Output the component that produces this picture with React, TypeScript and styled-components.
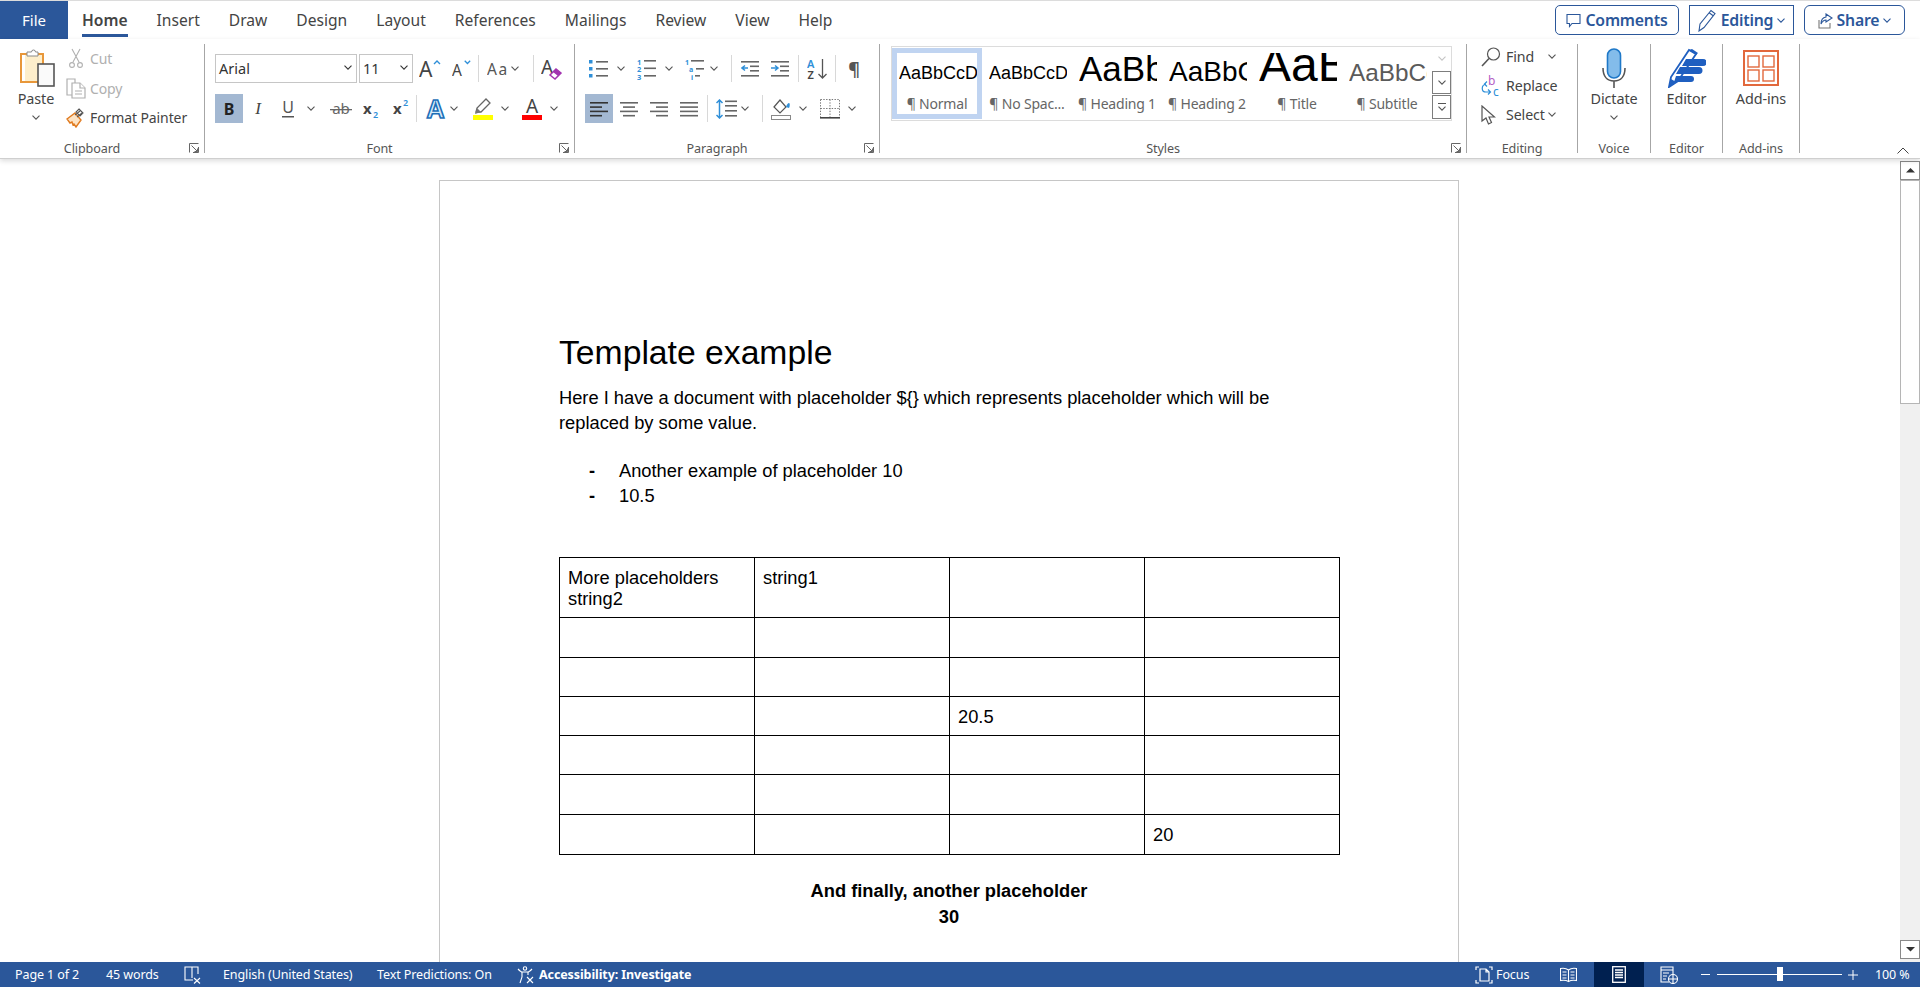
import React from 'react';
import styled, { createGlobalStyle } from 'styled-components';

const UI_FONT = '"Noto Sans", "Open Sans", "Liberation Sans", sans-serif';
const BLUE = '#2b579a';
const ICON_BLUE = '#2f8fd8';

const GlobalStyle = createGlobalStyle`
  html, body {
    margin: 0;
    padding: 0;
    height: 100%;
    overflow: hidden;
    background: #fff;
  }
  * {
    box-sizing: border-box;
  }
`;

const Window = styled.div`
  display: flex;
  flex-direction: column;
  height: 100vh;
  font-family: ${UI_FONT};
  color: #444;
`;

const TabRow = styled.div`
  display: flex;
  align-items: stretch;
  height: 39px;
  flex-shrink: 0;
  border-top: 1px solid #dcdcdc;
  background: #fff;
`;

const FileTab = styled.div`
  width: 68px;
  background: ${BLUE};
  color: #fff;
  font-size: 15px;
  display: flex;
  align-items: center;
  justify-content: center;
`;

const Tabs = styled.div`
  display: flex;
  padding-left: 14px;
  gap: 29px;
`;

const Tab = styled.div<{ $active?: boolean }>`
  position: relative;
  font-size: 15.6px;
  line-height: 38px;
  color: #444;
  font-weight: ${(p) => (p.$active ? 600 : 400)};
  border-bottom: 3px solid ${(p) => (p.$active ? BLUE : 'transparent')};
  height: 36px;
`;

const TopActions = styled.div`
  margin-left: auto;
  display: flex;
  align-items: flex-start;
  gap: 10px;
  padding: 4px 15px 0 0;
`;

const ActionButton = styled.div<{ $w: number; $radius: number }>`
  width: ${(p) => p.$w}px;
  height: 30px;
  border: 1px solid ${BLUE};
  border-radius: ${(p) => p.$radius}px;
  color: ${BLUE};
  display: flex;
  align-items: center;
  justify-content: center;
  gap: 4px;
  font-size: 15.8px;
  font-weight: 600;
  letter-spacing: -0.2px;
`;

const Ribbon = styled.div`
  display: flex;
  height: 120px;
  flex-shrink: 0;
  padding-top: 5px;
  background: #fff;
  border-bottom: 1px solid #cfcfcf;
  box-shadow: 0 2px 5px rgba(0, 0, 0, 0.14);
  position: relative;
  z-index: 2;
`;

const Group = styled.div<{ $w: number; $pl?: number }>`
  position: relative;
  width: ${(p) => p.$w}px;
  height: 109px;
  padding-left: ${(p) => p.$pl ?? 0}px;
  border-right: 1px solid #a6a6a6;
  flex-shrink: 0;
`;

const GroupBody = styled.div`
  height: 99px;
`;

const GroupLabel = styled.div<{ $launcher?: boolean }>`
  position: absolute;
  left: 0;
  right: ${(p) => (p.$launcher ? 20 : 0)}px;
  bottom: -1px;
  height: 10px;
  line-height: 10px;
  font-size: 12.6px;
  letter-spacing: -0.1px;
  text-align: center;
  color: #555;
`;

const Launcher = styled.div`
  position: absolute;
  right: 5px;
  bottom: 0;
  width: 10px;
  height: 10px;
  display: flex;
`;

const Collapse = styled.div`
  position: absolute;
  right: 11px;
  bottom: 4px;
  display: flex;
`;

const ToolRows = styled.div`
  display: flex;
  flex-direction: column;
  gap: 11px;
  padding-top: 10px;
`;

const ToolRow = styled.div`
  display: flex;
  height: 29px;
  align-items: center;
`;

const Cell = styled.div<{ $w: number; $ml?: number; $on?: boolean }>`
  width: ${(p) => p.$w}px;
  margin-left: ${(p) => p.$ml ?? 0}px;
  height: 29px;
  flex-shrink: 0;
  display: flex;
  align-items: center;
  justify-content: center;
  background: ${(p) => (p.$on ? '#a3b8d2' : 'transparent')};
`;

const Divider = styled.div<{ $ml: number }>`
  width: 1px;
  height: 27px;
  flex-shrink: 0;
  margin-left: ${(p) => p.$ml}px;
  margin-right: -1px;
  background: #d8d8d8;
`;

const Combo = styled.div<{ $w: number; $ml?: number }>`
  width: ${(p) => p.$w}px;
  margin-left: ${(p) => p.$ml ?? 0}px;
  height: 29px;
  flex-shrink: 0;
  border: 1px solid #c6c6c6;
  display: flex;
  align-items: center;
  justify-content: space-between;
  padding: 0 4px 2px 3px;
  font-size: 14.5px;
  color: #333;
`;

const ClipboardBody = styled.div`
  display: flex;
`;

const BigButton = styled.div<{ $w: number }>`
  width: ${(p) => p.$w}px;
  flex-shrink: 0;
  display: flex;
  flex-direction: column;
  align-items: center;
  padding-top: 3px;
`;

const BigIcon = styled.div<{ $shift?: number }>`
  height: 41px;
  padding-left: ${(p) => p.$shift ?? 0}px;
  display: flex;
  align-items: center;
  justify-content: center;
`;

const BigText = styled.div`
  font-size: 14.4px;
  letter-spacing: -0.1px;
  line-height: 21px;
  color: #444;
`;

const BigChevron = styled.div`
  height: 16px;
  display: flex;
  align-items: center;
`;

const SmallList = styled.div`
  display: flex;
  flex-direction: column;
  margin-left: -6px;
`;

const SmallRow = styled.div<{ $muted?: boolean }>`
  height: 29.5px;
  display: flex;
  align-items: center;
  font-size: 14px;
  letter-spacing: -0.1px;
  color: ${(p) => (p.$muted ? '#b0b0b0' : '#444')};
`;

const SmallIcon = styled.div`
  width: 24px;
  padding-right: 4px;
  flex-shrink: 0;
  display: flex;
  align-items: center;
  justify-content: center;
`;

const Gallery = styled.div`
  margin: 2px 0 0 11px;
  width: 561px;
  height: 75px;
  border: 1px solid #dcdcdc;
  display: flex;
`;

const StyleItem = styled.div<{ $on?: boolean }>`
  width: 90px;
  height: 71px;
  margin-top: 1px;
  flex-shrink: 0;
  border: 5px solid ${(p) => (p.$on ? '#c0d4f1' : 'transparent')};
  display: flex;
  flex-direction: column;
  align-items: center;
  overflow: hidden;
`;

const StyleSample = styled.div<{ $size: number; $color?: string; $base: number }>`
  width: 78px;
  margin-left: 2px;
  height: 35px;
  flex-shrink: 0;
  overflow: hidden;
  white-space: nowrap;
  font-family: 'Liberation Sans', Arial, sans-serif;
  font-size: ${(p) => p.$size}px;
  color: ${(p) => p.$color ?? '#000'};
  line-height: ${(p) => p.$base}px;
  text-align: left;
`;

const StyleName = styled.div`
  font-size: 14px;
  letter-spacing: -0.2px;
  line-height: 18px;
  margin-top: 7px;
  color: #666;
  white-space: nowrap;
`;

const GalleryScroll = styled.div`
  width: 19px;
  margin-left: auto;
  display: flex;
  flex-direction: column;
`;

const ScrollStep = styled.div<{ $border?: boolean }>`
  flex: 1;
  display: flex;
  flex-direction: column;
  gap: 2px;
  align-items: center;
  justify-content: center;
  border: 1px solid ${(p) => (p.$border ? '#7d7d7d' : 'transparent')};
  margin-bottom: ${(p) => (p.$border ? 1 : 0)}px;
`;

const MoreLine = styled.div`
  width: 8px;
  height: 1px;
  background: #555;
`;

const EditList = styled.div`
  display: flex;
  flex-direction: column;
  padding-left: 14px;
  margin-top: -2px;
`;

const EditRow = styled.div`
  height: 29px;
  display: flex;
  align-items: center;
  font-size: 14.2px;
  letter-spacing: -0.1px;
  color: #444;
`;

const EditIcon = styled.div`
  width: 25px;
  flex-shrink: 0;
  display: flex;
  align-items: center;
`;

const Main = styled.div`
  flex: 1;
  min-height: 0;
  display: flex;
  background: #fff;
`;

const DocArea = styled.div`
  flex: 1;
  overflow: hidden;
  padding: 21px 0 0 439px;
`;

const Page = styled.div`
  width: 1020px;
  min-height: 1300px;
  border: 1px solid #c6c6c6;
  background: #fff;
  padding: 152px 0 0 119px;
  font-family: 'Liberation Sans', Arial, sans-serif;
  font-size: 18.3px;
  color: #000;
`;

const DocTitle = styled.div`
  font-size: 33.7px;
  line-height: 38px;
  height: 53px;
`;

const DocParagraph = styled.div`
  width: 760px;
  line-height: 24.5px;
`;

const DocList = styled.ul`
  list-style: none;
  margin: 23px 0 0;
  padding: 0 0 0 30px;
`;

const DocListItem = styled.li`
  display: flex;
  line-height: 25px;
`;

const Dash = styled.span`
  width: 30px;
  font-weight: 700;
`;

const DocTable = styled.table`
  margin-top: 49px;
  border-collapse: collapse;
  table-layout: fixed;
  width: 780px;
`;

const DocRow = styled.tr<{ $h: number }>`
  height: ${(p) => p.$h}px;
`;

const DocCell = styled.td`
  width: 195px;
  border: 1px solid #000;
  padding: 8.5px 8px;
  line-height: 21px;
  vertical-align: top;
`;

const DocFooter = styled.div`
  width: 780px;
  margin-top: 23px;
  text-align: center;
  font-weight: 700;
  line-height: 25.5px;
`;

const ScrollBar = styled.div`
  width: 20px;
  flex-shrink: 0;
  margin-top: 2px;
  background: #f0f0f0;
  display: flex;
  flex-direction: column;
  padding-bottom: 3px;
`;

const ScrollButton = styled.div<{ $end?: boolean }>`
  height: 19px;
  margin-top: ${(p) => (p.$end ? 'auto' : '0')};
  background: #fff;
  border: 1px solid #8a8a8a;
  display: flex;
  align-items: center;
  justify-content: center;
  flex-shrink: 0;
`;

const ScrollThumb = styled.div`
  height: 224px;
  background: #fff;
  border: 1px solid #b5b5b5;
  flex-shrink: 0;
`;

const StatusBar = styled.div`
  height: 25px;
  flex-shrink: 0;
  background: ${BLUE};
  color: #fff;
  display: flex;
  align-items: stretch;
  font-size: 12.5px;
  letter-spacing: -0.1px;
`;

const StatusItem = styled.div<{ $w?: number; $ml?: number; $on?: boolean; $bold?: boolean }>`
  width: ${(p) => (p.$w ? `${p.$w}px` : 'auto')};
  margin-left: ${(p) => p.$ml ?? 0}px;
  flex-shrink: 0;
  display: flex;
  align-items: center;
  white-space: nowrap;
  background: ${(p) => (p.$on ? '#002050' : 'transparent')};
  justify-content: ${(p) => (p.$on ? 'center' : 'flex-start')};
  font-weight: ${(p) => (p.$bold ? 700 : 400)};
`;

const StatusRight = styled.div`
  margin-left: auto;
  display: flex;
  align-items: stretch;
`;

const ZoomTrack = styled.div`
  position: relative;
  width: 125px;
  margin-left: 7px;
  display: flex;
  align-items: center;
`;

const ZoomLine = styled.div`
  width: 100%;
  height: 1px;
  background: #fff;
`;

const ZoomThumb = styled.div`
  position: absolute;
  left: 60px;
  top: 5px;
  width: 6px;
  height: 14px;
  background: #fff;
`;

const GlyphText = styled.span<{ $bold?: boolean; $italic?: boolean; $size?: number; $color?: string }>`
  font-family: ${(p) => (p.$italic ? "'Liberation Serif', serif" : UI_FONT)};
  font-size: ${(p) => p.$size ?? 15}px;
  font-weight: ${(p) => (p.$bold ? 700 : 400)};
  font-style: ${(p) => (p.$italic ? 'italic' : 'normal')};
  color: ${(p) => p.$color ?? '#444'};
  line-height: 1;
`;

const Chevron = ({ color = '#555' }: { color?: string }) => (
  <svg width="8" height="5" viewBox="0 0 8 5">
    <path d="M.5.7 4 4.2 7.5.7" fill="none" stroke={color} strokeWidth="1.1" />
  </svg>
);

const LauncherIcon = () => (
  <svg width="10" height="10" viewBox="0 0 10 10" fill="none" stroke="#666">
    <path d="M.5 9.5v-9h9M9.5 4v5.5H4M2.5 2.5l6 6M5.500 8.500h3v-3" />
  </svg>
);

const Lines = ({ rows, color = '#666' }: { rows: [number, number, number][]; color?: string }) => (
  <>
    {rows.map(([rx, ry, rw], i) => (
      <rect key={i} x={rx} y={ry} width={rw} height="1.6" fill={color} />
    ))}
  </>
);

const PasteIcon = () => (
  <svg width="35" height="39" viewBox="0 0 35 39">
    <rect x="1" y="6" width="22" height="28" fill="#fdeecb" stroke="#e8973a" strokeWidth="2" />
    <rect x="2" y="7" width="3" height="26" fill="#fff" />
    <path d="M7 8V4h4.500a2 2 0 0 1 4 0H18v4z" fill="#fff" stroke="#8a8a8a" />
    <rect x="18" y="16" width="16" height="22" fill="#fafafa" stroke="#555" strokeWidth="1.6" />
  </svg>
);

const ScissorsIcon = () => (
  <svg width="14" height="21" viewBox="0 0 14 21" fill="none" stroke="#b0b0b0" strokeWidth="1.1">
    <path d="M3 1l7 13M11 1 4 14" />
    <circle cx="3" cy="17" r="2.4" />
    <circle cx="11" cy="17" r="2.4" />
  </svg>
);

const CopyIcon = () => (
  <svg width="20" height="21" viewBox="0 0 20 21" fill="#fff" stroke="#b0b0b0" strokeWidth="1.2">
    <path d="M1 1h8v16H1z" />
    <path d="M6 5h8l5 5v10H6z" />
    <path d="M14 5v5h5M9 13h7M9 16h7" />
  </svg>
);

const BrushIcon = () => (
  <svg width="20" height="20" viewBox="0 0 20 20">
    <path d="M1 11 9 5l6 7-5 7-2-3-1 1-1-3-2 1z" fill="#fde3c4" stroke="#e07a1f" strokeWidth="1.4" />
    <path d="M9 7l5-4M11 9l5-4M13 1l4 4-3 3-4-4z" fill="#fff" stroke="#555" strokeWidth="1.1" />
  </svg>
);

const GrowIcon = ({ big, up }: { big?: boolean; up?: boolean }) => (
  <svg width="22" height="22" viewBox="0 0 22 22">
    <text x="0" y="19" fontFamily={UI_FONT} fontSize={big ? 21 : 17} fill="#444">A</text>
    <path d={up ? 'M15 6l3-3 3 3' : 'M14 2l3 3 3-3'} fill="none" stroke={ICON_BLUE} strokeWidth="1.4" />
  </svg>
);

const CaseIcon = () => (
  <svg width="22" height="18" viewBox="0 0 22 18">
    <text x="0" y="15" fontFamily={UI_FONT} fontSize="15.5" fill="#555" letterSpacing="1.5">Aa</text>
  </svg>
);

const ClearIcon = () => (
  <svg width="22" height="22" viewBox="0 0 22 22">
    <text x="0" y="16" fontFamily={UI_FONT} fontSize="19" fill="#444">A</text>
    <path d="M9 17l6-6 5 4-6 6z" fill="#fff" stroke="#a335b0" strokeWidth="1.5" />
    <path d="M15 11l5 4-3 3-5-4z" fill="#a335b0" />
  </svg>
);

const UnderlineIcon = () => (
  <svg width="14" height="20" viewBox="0 0 14 20">
    <text x="7" y="14" textAnchor="middle" fontFamily={UI_FONT} fontSize="16" fill="#555">U</text>
    <rect x="1" y="17" width="12" height="1.5" fill="#555" />
  </svg>
);

const StrikeIcon = () => (
  <svg width="22" height="16" viewBox="0 0 22 16">
    <text x="11" y="13" textAnchor="middle" fontFamily={UI_FONT} fontSize="15" fill="#666">ab</text>
    <rect x="0" y="8" width="22" height="1.3" fill="#666" />
  </svg>
);

const ScriptIcon = ({ up }: { up?: boolean }) => (
  <svg width="18" height="20" viewBox="0 0 18 20">
    <text x="0" y="15" fontFamily={UI_FONT} fontSize="15" fontWeight="700" fill="#444">x</text>
    <text x="10" y={up ? 7 : 19} fontFamily={UI_FONT} fontSize="9" fontWeight="600" fill={ICON_BLUE}>2</text>
  </svg>
);

const TextEffectIcon = () => (
  <svg width="21" height="22" viewBox="0 0 21 22">
    <text x="10.5" y="20" textAnchor="middle" fontFamily="'Liberation Sans', sans-serif" fontSize="25" fontWeight="700" fill="#d7ecfa" stroke="#1d6fb8" strokeWidth="1.6">A</text>
  </svg>
);

const HighlightIcon = () => (
  <svg width="20" height="24" viewBox="0 0 20 24">
    <path d="M3 15l1-4L13 2l4 4-9 9z" fill="#fff" stroke="#666" strokeWidth="1.3" />
    <path d="M2 17l2-6 4 4z" fill="#777" />
    <rect y="18" width="20" height="5" fill="#ffff00" />
  </svg>
);

const FontColorIcon = () => (
  <svg width="20" height="24" viewBox="0 0 20 24">
    <text x="10" y="16" textAnchor="middle" fontFamily={UI_FONT} fontSize="19" fill="#444">A</text>
    <rect y="18" width="20" height="5" fill="#ff0000" />
  </svg>
);

const BulletsIcon = () => (
  <svg width="20" height="20" viewBox="0 0 20 20">
    <rect x="0" y="1" width="3.5" height="3.5" fill={ICON_BLUE} />
    <rect x="0" y="8" width="3.5" height="3.5" fill={ICON_BLUE} />
    <rect x="0" y="15" width="3.5" height="3.5" fill={ICON_BLUE} />
    <Lines rows={[[7, 2, 12], [7, 9, 12], [7, 16, 12]]} />
  </svg>
);

const NumberingIcon = () => (
  <svg width="20" height="22" viewBox="0 0 20 22">
    <g fontFamily={UI_FONT} fontSize="7.5" fontWeight="700" fill={ICON_BLUE}>
      <text x="0" y="6.5">1</text>
      <text x="0" y="14">2</text>
      <text x="0" y="21.5">3</text>
    </g>
    <Lines rows={[[7, 2, 12], [7, 9.5, 12], [7, 17, 12]]} />
  </svg>
);

const MultilevelIcon = () => (
  <svg width="20" height="22" viewBox="0 0 20 22">
    <g fontFamily={UI_FONT} fontSize="7" fontWeight="700" fill={ICON_BLUE}>
      <text x="0" y="6.5">1</text>
      <text x="4" y="14">a</text>
      <text x="6" y="21.5">i</text>
    </g>
    <Lines rows={[[6, 2, 13], [11, 10, 8], [10, 17, 5]]} />
  </svg>
);

const IndentIcon = ({ more }: { more?: boolean }) => (
  <svg width="18" height="18" viewBox="0 0 18 18">
    <Lines rows={[[0, 1, 18], [9, 5.5, 9], [9, 10, 9], [0, 15, 18]]} />
    <path d={more ? 'M0 8h6M4 5.500 7 8l-3 2.500' : 'M7 8H1M4 5.500 1 8l3 2.500'} fill="none" stroke={ICON_BLUE} strokeWidth="1.5" />
  </svg>
);

const SortIcon = () => (
  <svg width="21" height="22" viewBox="0 0 21 22">
    <text x="0" y="9.5" fontFamily={UI_FONT} fontSize="11" fontWeight="600" fill={ICON_BLUE}>A</text>
    <text x="0.5" y="21" fontFamily={UI_FONT} fontSize="11" fontWeight="600" fill="#444">Z</text>
    <path d="M15.500 1v19M11.500 16l4 4 4-4" fill="none" stroke="#555" strokeWidth="1.3" />
  </svg>
);

const AlignIcon = ({ rows, dark }: { rows: [number, number][]; dark?: boolean }) => (
  <svg width="18" height="16" viewBox="0 0 18 16">
    {rows.map(([x, w], i) => (
      <rect key={i} x={x} y={1 + i * 4.3} width={w} height="1.6" fill={dark ? '#333' : '#666'} />
    ))}
  </svg>
);

const LineSpacingIcon = () => (
  <svg width="21" height="20" viewBox="0 0 21 20">
    <path d="M3.500 1v18M.5 4l3-3 3 3M.5 16l3 3 3-3" fill="none" stroke={ICON_BLUE} strokeWidth="1.5" />
    <Lines rows={[[9, 1.5, 12], [9, 6, 12], [9, 11, 12], [9, 16, 12]]} />
  </svg>
);

const ShadingIcon = () => (
  <svg width="20" height="22" viewBox="0 0 20 22">
    <path d="M3 9l6-7 6 7-6 6z" fill="#fff" stroke="#555" strokeWidth="1.2" />
    <path d="M15 9c1-3 2-4 3-4s1 3 0 5z" fill={ICON_BLUE} />
    <rect x=".5" y="17.5" width="19" height="4" fill="#fff" stroke="#888" />
  </svg>
);

const BordersIcon = () => (
  <svg width="20" height="20" viewBox="0 0 20 20" fill="none">
    <path d="M.5.5h19v18M.5.5v18M10 .5v18M.5 9.500h19" stroke="#777" strokeDasharray="1.4 1.4" />
    <rect x="0" y="18" width="20" height="1.6" fill="#444" />
  </svg>
);

const FindIcon = () => (
  <svg width="20" height="20" viewBox="0 0 20 20" fill="none" stroke="#555" strokeWidth="1.2">
    <circle cx="12.5" cy="7" r="6" />
    <path d="M8 11.500 1 19" strokeWidth="1.6" />
  </svg>
);

const ReplaceIcon = () => (
  <svg width="20" height="22" viewBox="0 0 20 22">
    <text x="7" y="10" fontFamily={UI_FONT} fontSize="12" fill="#b45cc4">b</text>
    <text x="12" y="21" fontFamily={UI_FONT} fontSize="12" fill={ICON_BLUE}>c</text>
    <path d="M5 9C0 10 0 17 5 17h4M7 14.500 9.500 17 7 19.500M6 6.500 3.500 9 6 11.500" fill="none" stroke={ICON_BLUE} strokeWidth="1.2" />
  </svg>
);

const SelectIcon = () => (
  <svg width="15" height="20" viewBox="0 0 15 20">
    <path d="M1 1v15l4-3 2.500 6 3-1.500L8 12h5.500z" fill="#fff" stroke="#555" strokeWidth="1.2" />
  </svg>
);

const MicIcon = () => (
  <svg width="24" height="40" viewBox="0 0 24 40">
    <rect x="5.500" y="1" width="13" height="29" rx="6.500" fill="#83bcea" stroke="#1e78c8" strokeWidth="1.6" />
    <path d="M1 20c0 8 4 13 11 13s11-5 11-13M12 33v7" fill="none" stroke="#555" strokeWidth="1.6" />
  </svg>
);

const EditorIcon = () => (
  <svg width="38" height="40" viewBox="0 0 38 40">
    <path d="M1 39 3 29 21 2l7 4L10 33z" fill="#fff" stroke="#1f5fc0" strokeWidth="1.8" />
    <path d="M21 2l3-1 6 4-2 2zM1 39l2-8 5 3z" fill="#1f5fc0" />
    <path d="M18 11h17a3 3 0 0 1 0 7H14zM12 19h19a3 3 0 0 1 0 7H8zM8 28h15a3 3 0 0 1 0 6H6z" fill="#1f5fc0" />
  </svg>
);

const AddinsIcon = () => (
  <svg width="36" height="36" viewBox="0 0 36 36" fill="none" stroke="#e2683c" strokeWidth="1.4">
    <rect x="1" y="1" width="34" height="34" strokeWidth="2" />
    <rect x="5" y="6" width="11" height="11" />
    <rect x="20" y="6" width="11" height="11" />
    <rect x="5" y="20" width="11" height="11" />
    <rect x="20" y="20" width="11" height="11" />
  </svg>
);

const CommentIcon = () => (
  <svg width="15" height="15" viewBox="0 0 15 15">
    <path d="M1 1.500h13v9H6L3.500 13.500v-3H1z" fill="#fff" stroke={BLUE} strokeWidth="1.1" />
  </svg>
);

const PencilIcon = () => (
  <svg width="19" height="23" viewBox="0 0 19 23">
    <path d="M1 22 2 15 13 1.500l4 3L6 18.500zM11.500 4l4 3" fill="#fff" stroke={BLUE} strokeWidth="1.1" />
  </svg>
);

const ShareIcon = () => (
  <svg width="15" height="17" viewBox="0 0 15 17" fill="none" stroke="#777" strokeWidth="1.1">
    <path d="M8 2l6 4-6 4V8C5 8 4 10 3 12c0-5 2-6.500 5-7z" stroke={BLUE} />
    <path d="M1 8v8h11v-5" />
  </svg>
);

const ScrollArrow = ({ up }: { up?: boolean }) => (
  <svg width="9" height="4.500" viewBox="0 0 8 4">
    <path d={up ? 'M0 4 4 0l4 4z' : 'M0 0l4 4 4-4z'} fill="#333" />
  </svg>
);

const ProofIcon = () => (
  <svg width="18" height="18" viewBox="0 0 18 18" fill="none" stroke="#fff" strokeWidth="1.1">
    <path d="M9 14H1V1h7.500L14 1v7M8 1v11" />
    <path d="M10 12l6 5.500M16 12l-6 5.500" />
  </svg>
);

const AccessibilityIcon = () => (
  <svg width="18" height="18" viewBox="0 0 18 18" fill="none" stroke="#fff" strokeWidth="1.1">
    <circle cx="8" cy="2.500" r="1.700" />
    <path d="M1 3c3 3 4 3 4 3v5L3 17M15 3c-3 3-4 3-4 3v3M5 6h6" />
    <path d="M10 11l6 6M16 11l-6 6" />
  </svg>
);

const FocusIcon = () => (
  <svg width="18" height="18" viewBox="0 0 18 18" fill="none" stroke="#fff" strokeWidth="1.2">
    <path d="M1 4V1h3M14 1h3v3M17 14v3h-3M4 17H1v-3" />
    <path d="M5 15V3h6l3 3v9zM11 3v3h3" />
  </svg>
);

const ReadIcon = () => (
  <svg width="17" height="16" viewBox="0 0 17 16" fill="none" stroke="#fff" strokeWidth="1.1">
    <path d="M8.500 3C6 1 3 1 .5 1.500v12c2.500-.5 5.500-.5 8 1 2.500-1.500 5.500-1.500 8-1v-12C14 1 11 1 8.500 3zM8.500 3v11.500M2.500 5H6.500M2.500 8H6.500M2.500 11H6.500M10.500 5h4M10.500 8h4M10.500 11h4" />
  </svg>
);

const PrintIcon = () => (
  <svg width="14" height="17" viewBox="0 0 14 17" fill="none" stroke="#fff" strokeWidth="1.300">
    <rect x=".7" y=".7" width="12.600" height="15.600" />
    <path d="M3 4h8M3 6.500h8M3 9h8M3 11.500h8" />
  </svg>
);

const WebIcon = () => (
  <svg width="18" height="18" viewBox="0 0 18 18" fill="none" stroke="#fff" strokeWidth="1.1">
    <path d="M9 16H1V1h12v7M1 4h12M3 7h6M3 10h4M3 13h3" />
    <circle cx="13" cy="13" r="4.500" fill={BLUE} />
    <path d="M8.500 13h9M13 8.500v9" />
  </svg>
);

const Minus = () => (
  <svg width="9" height="9" viewBox="0 0 9 9"><rect y="4" width="9" height="1" fill="#fff" /></svg>
);

const Plus = () => (
  <svg width="10" height="10" viewBox="0 0 10 10"><path d="M0 5h10M5 0v10" stroke="#fff" /></svg>
);

const tabs = ['Insert', 'Draw', 'Design', 'Layout', 'References', 'Mailings', 'Review', 'View', 'Help'];
const rowHeights = [60, 40, 39, 39, 39, 40, 40];

const tableText: Record<string, React.ReactNode> = {
  '0-0': (
    <>
      More placeholders
      <br />
      string2
    </>
  ),
  '0-1': 'string1',
  '3-2': '20.5',
  '6-3': '20',
};

const samples = [
  { name: '¶ Normal', text: 'AaBbCcDd', size: 18, base: 40, on: true },
  { name: '¶ No Spac...', text: 'AaBbCcDd', size: 18, base: 40 },
  { name: '¶ Heading 1', text: 'AaBbCc', size: 35, base: 32 },
  { name: '¶ Heading 2', text: 'AaBbCc', size: 28, base: 37 },
  { name: '¶ Title', text: 'AaBbC', size: 48, base: 23 },
  { name: '¶ Subtitle', text: 'AaBbCc', size: 24.3, base: 40, color: '#5a5a5a' },
];

const App = () => (
  <Window>
    <GlobalStyle />
    <TabRow>
      <FileTab>File</FileTab>
      <Tabs>
        <Tab $active>Home</Tab>
        {tabs.map((t) => (
          <Tab key={t}>{t}</Tab>
        ))}
      </Tabs>
      <TopActions>
        <ActionButton $w={124} $radius={5}>
          <CommentIcon />
          Comments
        </ActionButton>
        <ActionButton $w={105} $radius={0}>
          <PencilIcon />
          Editing
          <Chevron color={BLUE} />
        </ActionButton>
        <ActionButton $w={101} $radius={6}>
          <ShareIcon />
          Share
          <Chevron color={BLUE} />
        </ActionButton>
      </TopActions>
    </TabRow>

    <Ribbon>
      <Group $w={205}>
        <GroupBody>
          <ClipboardBody>
            <BigButton $w={72}>
              <BigIcon $shift={3}>
                <PasteIcon />
              </BigIcon>
              <BigText>Paste</BigText>
              <BigChevron>
                <Chevron />
              </BigChevron>
            </BigButton>
            <SmallList>
              <SmallRow $muted>
                <SmallIcon><ScissorsIcon /></SmallIcon>
                Cut
              </SmallRow>
              <SmallRow $muted>
                <SmallIcon><CopyIcon /></SmallIcon>
                Copy
              </SmallRow>
              <SmallRow>
                <SmallIcon><BrushIcon /></SmallIcon>
                Format Painter
              </SmallRow>
            </SmallList>
          </ClipboardBody>
        </GroupBody>
        <GroupLabel $launcher>Clipboard</GroupLabel>
        <Launcher><LauncherIcon /></Launcher>
      </Group>

      <Group $w={370} $pl={10}>
        <GroupBody>
          <ToolRows>
            <ToolRow>
              <Combo $w={142}>
                Arial
                <Chevron color="#333" />
              </Combo>
              <Combo $w={54} $ml={2}>
                11
                <Chevron color="#333" />
              </Combo>
              <Cell $w={22} $ml={6}><GrowIcon big up /></Cell>
              <Cell $w={20} $ml={11}><GrowIcon /></Cell>
              <Divider $ml={6} />
              <Cell $w={22} $ml={9}><CaseIcon /></Cell>
              <Cell $w={12}><Chevron /></Cell>
              <Divider $ml={12} />
              <Cell $w={22} $ml={8}><ClearIcon /></Cell>
            </ToolRow>
            <ToolRow>
              <Cell $w={28} $on><GlyphText $bold $size={16} $color="#222">B</GlyphText></Cell>
              <Cell $w={30}><GlyphText $italic $size={17}>I</GlyphText></Cell>
              <Cell $w={30}><UnderlineIcon /></Cell>
              <Cell $w={16}><Chevron /></Cell>
              <Cell $w={30} $ml={7}><StrikeIcon /></Cell>
              <Cell $w={32}><ScriptIcon /></Cell>
              <Cell $w={28}><ScriptIcon up /></Cell>
              <Divider $ml={0} />
              <Cell $w={30} $ml={4}><TextEffectIcon /></Cell>
              <Cell $w={8}><Chevron /></Cell>
              <Cell $w={30} $ml={10}><HighlightIcon /></Cell>
              <Cell $w={14}><Chevron /></Cell>
              <Cell $w={30} $ml={5}><FontColorIcon /></Cell>
              <Cell $w={14}><Chevron /></Cell>
            </ToolRow>
          </ToolRows>
        </GroupBody>
        <GroupLabel $launcher>Font</GroupLabel>
        <Launcher><LauncherIcon /></Launcher>
      </Group>

      <Group $w={305} $pl={10}>
        <GroupBody>
          <ToolRows>
            <ToolRow>
              <Cell $w={20} $ml={4}><BulletsIcon /></Cell>
              <Cell $w={12} $ml={6}><Chevron /></Cell>
              <Cell $w={20} $ml={10}><NumberingIcon /></Cell>
              <Cell $w={12} $ml={6}><Chevron /></Cell>
              <Cell $w={20} $ml={10}><MultilevelIcon /></Cell>
              <Cell $w={12} $ml={3}><Chevron /></Cell>
              <Divider $ml={11} />
              <Cell $w={18} $ml={10}><IndentIcon /></Cell>
              <Cell $w={18} $ml={12}><IndentIcon more /></Cell>
              <Divider $ml={9} />
              <Cell $w={21} $ml={9}><SortIcon /></Cell>
              <Divider $ml={7} />
              <Cell $w={14} $ml={12}><GlyphText $bold $size={18} $color="#555">¶</GlyphText></Cell>
            </ToolRow>
            <ToolRow>
              <Cell $w={28} $on><AlignIcon dark rows={[[0, 18], [0, 12], [0, 18], [0, 12]]} /></Cell>
              <Cell $w={18} $ml={7}><AlignIcon rows={[[0, 18], [3, 12], [0, 18], [3, 12]]} /></Cell>
              <Cell $w={18} $ml={12}><AlignIcon rows={[[0, 18], [6, 12], [0, 18], [6, 12]]} /></Cell>
              <Cell $w={18} $ml={12}><AlignIcon rows={[[0, 18], [0, 18], [0, 18], [0, 18]]} /></Cell>
              <Divider $ml={9} />
              <Cell $w={21} $ml={9}><LineSpacingIcon /></Cell>
              <Cell $w={12} $ml={2}><Chevron /></Cell>
              <Divider $ml={11} />
              <Cell $w={20} $ml={9}><ShadingIcon /></Cell>
              <Cell $w={12} $ml={6}><Chevron /></Cell>
              <Cell $w={20} $ml={11}><BordersIcon /></Cell>
              <Cell $w={12} $ml={6}><Chevron /></Cell>
            </ToolRow>
          </ToolRows>
        </GroupBody>
        <GroupLabel $launcher>Paragraph</GroupLabel>
        <Launcher><LauncherIcon /></Launcher>
      </Group>

      <Group $w={587}>
        <Gallery>
          {samples.map((s) => (
            <StyleItem key={s.name} $on={s.on}>
              <StyleSample $size={s.size} $base={s.base} $color={s.color}>{s.text}</StyleSample>
              <StyleName>{s.name}</StyleName>
            </StyleItem>
          ))}
          <GalleryScroll>
            <ScrollStep><Chevron color="#c4c4c4" /></ScrollStep>
            <ScrollStep $border><Chevron /></ScrollStep>
            <ScrollStep $border>
              <MoreLine />
              <Chevron />
            </ScrollStep>
          </GalleryScroll>
        </Gallery>
        <GroupLabel $launcher>Styles</GroupLabel>
        <Launcher><LauncherIcon /></Launcher>
      </Group>

      <Group $w={111}>
        <GroupBody>
          <EditList>
            <EditRow>
              <EditIcon><FindIcon /></EditIcon>
              Find
              <Cell $w={8} $ml={14}><Chevron /></Cell>
            </EditRow>
            <EditRow>
              <EditIcon><ReplaceIcon /></EditIcon>
              Replace
            </EditRow>
            <EditRow>
              <EditIcon><SelectIcon /></EditIcon>
              Select
              <Cell $w={8} $ml={3}><Chevron /></Cell>
            </EditRow>
          </EditList>
        </GroupBody>
        <GroupLabel>Editing</GroupLabel>
      </Group>

      <Group $w={73}>
        <BigButton $w={72}>
          <BigIcon><MicIcon /></BigIcon>
          <BigText>Dictate</BigText>
          <BigChevron><Chevron /></BigChevron>
        </BigButton>
        <GroupLabel>Voice</GroupLabel>
      </Group>

      <Group $w={72}>
        <BigButton $w={71}>
          <BigIcon><EditorIcon /></BigIcon>
          <BigText>Editor</BigText>
        </BigButton>
        <GroupLabel>Editor</GroupLabel>
      </Group>

      <Group $w={77}>
        <BigButton $w={76}>
          <BigIcon><AddinsIcon /></BigIcon>
          <BigText>Add-ins</BigText>
        </BigButton>
        <GroupLabel>Add-ins</GroupLabel>
      </Group>

      <Collapse>
        <svg width="12" height="7" viewBox="0 0 12 7">
          <path d="M.5 6.500 6 1l5.500 5.500" fill="none" stroke="#444" />
        </svg>
      </Collapse>
    </Ribbon>

    <Main>
      <DocArea>
        <Page>
          <DocTitle>Template example</DocTitle>
          <DocParagraph>
            Here I have a document with placeholder {'${}'} which represents placeholder which will be replaced by some value.
          </DocParagraph>
          <DocList>
            <DocListItem>
              <Dash>-</Dash>
              Another example of placeholder 10
            </DocListItem>
            <DocListItem>
              <Dash>-</Dash>
              10.5
            </DocListItem>
          </DocList>
          <DocTable>
            <tbody>
              {rowHeights.map((h, r) => (
                <DocRow key={r} $h={h}>
                  {[0, 1, 2, 3].map((c) => (
                    <DocCell key={c}>{tableText[`${r}-${c}`]}</DocCell>
                  ))}
                </DocRow>
              ))}
            </tbody>
          </DocTable>
          <DocFooter>
            And finally, another placeholder
            <br />
            30
          </DocFooter>
        </Page>
      </DocArea>
      <ScrollBar>
        <ScrollButton><ScrollArrow up /></ScrollButton>
        <ScrollThumb />
        <ScrollButton $end><ScrollArrow /></ScrollButton>
      </ScrollBar>
    </Main>

    <StatusBar>
      <StatusItem $ml={15} $w={91}>Page 1 of 2</StatusItem>
      <StatusItem $w={78}>45 words</StatusItem>
      <StatusItem $w={39}><ProofIcon /></StatusItem>
      <StatusItem $w={154}>English (United States)</StatusItem>
      <StatusItem $w={140}>Text Predictions: On</StatusItem>
      <StatusItem $w={22}><AccessibilityIcon /></StatusItem>
      <StatusItem $bold>Accessibility: Investigate</StatusItem>
      <StatusRight>
        <StatusItem $w={21}><FocusIcon /></StatusItem>
        <StatusItem $w={33}>Focus</StatusItem>
        <StatusItem $ml={31} $w={17}><ReadIcon /></StatusItem>
        <StatusItem $ml={17} $w={50} $on><PrintIcon /></StatusItem>
        <StatusItem $ml={16} $w={18}><WebIcon /></StatusItem>
        <StatusItem $ml={23} $w={9}><Minus /></StatusItem>
        <ZoomTrack>
          <ZoomLine />
          <ZoomThumb />
        </ZoomTrack>
        <StatusItem $ml={6} $w={10}><Plus /></StatusItem>
        <StatusItem $ml={17} $w={45}>100 %</StatusItem>
      </StatusRight>
    </StatusBar>
  </Window>
);

export default App;
